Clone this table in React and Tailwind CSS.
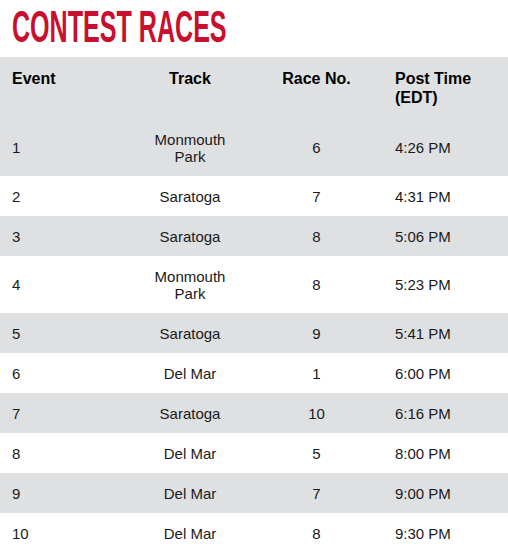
const races = [
  { event: 1, track: ["Monmouth", "Park"], race: 6, time: "4:26 PM" },
  { event: 2, track: ["Saratoga"], race: 7, time: "4:31 PM" },
  { event: 3, track: ["Saratoga"], race: 8, time: "5:06 PM" },
  { event: 4, track: ["Monmouth", "Park"], race: 8, time: "5:23 PM" },
  { event: 5, track: ["Saratoga"], race: 9, time: "5:41 PM" },
  { event: 6, track: ["Del Mar"], race: 1, time: "6:00 PM" },
  { event: 7, track: ["Saratoga"], race: 10, time: "6:16 PM" },
  { event: 8, track: ["Del Mar"], race: 5, time: "8:00 PM" },
  { event: 9, track: ["Del Mar"], race: 7, time: "9:00 PM" },
  { event: 10, track: ["Del Mar"], race: 8, time: "9:30 PM" },
];

function App() {
  return (
    <div className="w-[508px] bg-white font-['Liberation_Sans',Arial,sans-serif]">
      <h1 className="pt-[5px] pl-[12px] h-[57px] overflow-hidden">
        <span className="inline-block origin-left scale-x-[0.57] text-[44px] leading-[44px] font-bold text-[#c8102e] font-['Liberation_Sans_Narrow','Liberation_Sans',sans-serif] whitespace-nowrap">
          CONTEST RACES
        </span>
      </h1>

      <table className="w-full table-fixed border-collapse">
        <colgroup>
          <col className="w-[130px]" />
          <col className="w-[120px]" />
          <col className="w-[133px]" />
          <col />
        </colgroup>
        <thead>
          <tr className="bg-[#dfe0e2] text-black text-[16px] leading-[19px] font-bold">
            <th className="text-left align-top pl-[12px] pt-[12px] pb-[12px]">Event</th>
            <th className="text-center align-top pt-[12px] pb-[12px]">Track</th>
            <th className="text-center align-top pt-[12px] pb-[12px]">Race No.</th>
            <th className="text-left align-top pl-[12px] pt-[12px] pb-[12px]">
              Post Time
              <br />
              (EDT)
            </th>
          </tr>
        </thead>
        <tbody className="text-[15px] leading-[17px] text-[#1a1a1a]">
          {races.map((r, i) => (
            <tr key={r.event} className={i % 2 === 0 ? "bg-[#dfe0e2]" : "bg-white"}>
              <td className="pl-[12px] py-[11.5px] align-middle">{r.event}</td>
              <td className="text-center py-[11.5px] align-middle">
                {r.track.map((t, j) => (
                  <div key={j}>{t}</div>
                ))}
              </td>
              <td className="text-center py-[11.5px] align-middle">{r.race}</td>
              <td className="pl-[12px] py-[11.5px] align-middle">{r.time}</td>
            </tr>
          ))}
        </tbody>
      </table>
    </div>
  );
}

export default App;
